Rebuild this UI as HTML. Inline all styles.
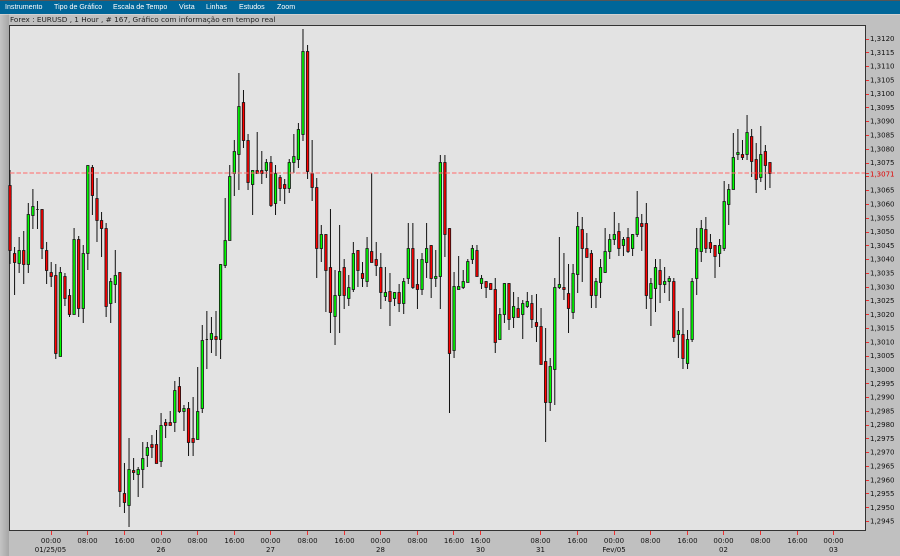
<!DOCTYPE html>
<html><head><meta charset="utf-8"><style>
html,body{margin:0;padding:0;width:900px;height:556px;overflow:hidden;background:#c0c0c0}
svg{position:absolute;left:0;top:0}
.m{font:7.1px "Liberation Sans",sans-serif;fill:#fff}
.t{font:7.28px "DejaVu Sans",sans-serif;fill:#222}
.p{font:7px "DejaVu Sans",sans-serif;fill:#111}
.x{font:7px "DejaVu Sans",sans-serif;fill:#111;text-anchor:middle}
</style></head><body>
<svg id="s" width="900" height="556" viewBox="0 0 900 556" xmlns="http://www.w3.org/2000/svg">
<defs><linearGradient id="g"><stop offset="0" stop-color="#c4c4c4"/><stop offset="1" stop-color="#a6a6a6"/></linearGradient></defs>
<rect width="900" height="556" fill="#c0c0c0"/>
<rect x="0" y="14" width="9" height="542" fill="url(#g)"/>
<rect width="900" height="14" fill="#006699"/>
<rect width="900" height="1" fill="#555"/>
<rect x="0" y="14" width="900" height="1" fill="#ddd" opacity=".6"/>
<text class="m" x="5" y="9">Instrumento</text>
<text class="m" x="54" y="9">Tipo de Gráfico</text>
<text class="m" x="113" y="9">Escala de Tempo</text>
<text class="m" x="179" y="9">Vista</text>
<text class="m" x="206" y="9">Linhas</text>
<text class="m" x="239" y="9">Estudos</text>
<text class="m" x="277" y="9">Zoom</text>
<text class="t" x="10" y="22">Forex : EURUSD , 1 Hour , # 167, Gráfico com informação em tempo real</text>
<rect x="9.5" y="25.5" width="856" height="505" fill="#e3e3e3" stroke="#333" stroke-width="1"/>
<g id="c"></g>
<line x1="10" y1="173" x2="865" y2="173" stroke="#ff7070" stroke-width="1.3" stroke-dasharray="4.5 2" opacity=".85"/>
<g id="tk"></g>
<g transform="translate(0,-.5)">
<text class="p" x="870" y="41.5">1,3120</text><text class="p" x="870" y="55.3">1,3115</text><text class="p" x="870" y="69.1">1,3110</text><text class="p" x="870" y="82.9">1,3105</text><text class="p" x="870" y="96.7">1,3100</text><text class="p" x="870" y="110.5">1,3095</text><text class="p" x="870" y="124.2">1,3090</text><text class="p" x="870" y="138">1,3085</text><text class="p" x="870" y="151.8">1,3080</text><text class="p" x="870" y="165.6">1,3075</text>
<text class="p" x="870" y="177" style="fill:#e00000">1,3071</text>
<text class="p" x="870" y="193.2">1,3065</text><text class="p" x="870" y="207">1,3060</text><text class="p" x="870" y="220.8">1,3055</text><text class="p" x="870" y="234.6">1,3050</text><text class="p" x="870" y="248.4">1,3045</text><text class="p" x="870" y="262.2">1,3040</text><text class="p" x="870" y="276">1,3035</text><text class="p" x="870" y="289.8">1,3030</text><text class="p" x="870" y="303.5">1,3025</text><text class="p" x="870" y="317.3">1,3020</text><text class="p" x="870" y="331.1">1,3015</text><text class="p" x="870" y="344.9">1,3010</text><text class="p" x="870" y="358.7">1,3005</text><text class="p" x="870" y="372.5">1,3000</text><text class="p" x="870" y="386.3">1,2995</text><text class="p" x="870" y="400.1">1,2990</text><text class="p" x="870" y="413.9">1,2985</text><text class="p" x="870" y="427.7">1,2980</text><text class="p" x="870" y="441.5">1,2975</text><text class="p" x="870" y="455.2">1,2970</text><text class="p" x="870" y="469">1,2965</text><text class="p" x="870" y="482.8">1,2960</text><text class="p" x="870" y="496.6">1,2955</text><text class="p" x="870" y="510.4">1,2950</text><text class="p" x="870" y="524.2">1,2945</text>
</g>
<text class="x" x="51" y="543">00:00</text><text class="x" x="87.5" y="543">08:00</text><text class="x" x="124.5" y="543">16:00</text><text class="x" x="161" y="543">00:00</text><text class="x" x="197.5" y="543">08:00</text><text class="x" x="234.5" y="543">16:00</text><text class="x" x="270.5" y="543">00:00</text><text class="x" x="307.5" y="543">08:00</text><text class="x" x="344.5" y="543">16:00</text><text class="x" x="380.5" y="543">00:00</text><text class="x" x="417.5" y="543">08:00</text><text class="x" x="454" y="543">16:00</text><text class="x" x="480.5" y="543">16:00</text><text class="x" x="540.5" y="543">08:00</text><text class="x" x="577.5" y="543">16:00</text><text class="x" x="614" y="543">00:00</text><text class="x" x="650.5" y="543">08:00</text><text class="x" x="687.5" y="543">16:00</text><text class="x" x="723.5" y="543">00:00</text><text class="x" x="760.5" y="543">08:00</text><text class="x" x="797.5" y="543">16:00</text><text class="x" x="833.5" y="543">00:00</text>
<text class="x" x="50.5" y="552">01/25/05</text><text class="x" x="161" y="552">26</text><text class="x" x="270.5" y="552">27</text><text class="x" x="380.5" y="552">28</text><text class="x" x="480.5" y="552">30</text><text class="x" x="540.5" y="552">31</text><text class="x" x="614" y="552">Fev/05</text><text class="x" x="723.5" y="552">02</text><text class="x" x="833.5" y="552">03</text>
</svg>
<script>
var d="r170 264 185 250,r247 295 253 262,g237 273 250 263,r231 284 250 264,g203 273 214 264,g189 229 206 215,k201 229 209 209,r209 259 209 248,r242 284 250 270,r262 287 272 276,r264 359 275 353,g267 356 272 356,r273 306 276 298,r289 317 295 314,g228 314 239 314,r236 317 239 308,g245 323 253 308,g165 270 165 253,r165 215 167 195,r178 242 198 220,r212 257 220 228,r223 317 228 306,g278 323 281 303,g250 303 275 284,r272 507 272 491,r463 513 493 502,g438 527 469 505,r458 480 470 472,g467 497 469 474,g442 488 458 469,g442 467 447 455,r435 458 444 447,r430 463 444 463,g413 467 425 461,r419 438 422 425,r411 425 422 425,g381 432 390 422,r377 413 386 411,g405 431 408 411,r402 456 408 442,r397 456 438 442,g367 439 411 439,g325 413 340 408,k311 369 339 339,g317 353 333 339,r311 356 336 339,g264 359 264 339,g198 268 240 265,g165 240 176 240,g140 196 151 173,g73 190 106 154,r90 148 102 140,r134 190 140 182,g170 215 170 184,r132 173 170 173,r151 184 170 173,g159 178 162 170,r156 207 162 205,g165 215 173 203,r175 201 177 188,r179 204 184 188,g159 193 162 188,g134 173 156 162,g123 168 129 159,g29 141 51 134,r45 179 51 171,r140 201 173 187,r178 278 187 248,g225 262 234 248,r234 312 234 270,r209 333 267 312,g270 345 295 316,g225 333 271 295,r259 309 267 295,g275 306 287 298,g242 292 253 289,r250 287 250 270,r262 287 273 278,g237 287 248 281,r173 262 251 262,r242 276 259 265,r253 309 267 292,g267 301 292 296,r273 326 291 301,g292 306 292 298,r284 312 292 303,g278 314 281 303,g223 284 248 278,r223 289 248 287,r259 309 284 289,g253 295 259 289,g223 278 248 262,r245 298 245 278,g250 287 276 278,g155 309 162 276,r155 257 162 234,r228 413 228 353,g272 358 286 350,g256 289 286 289,g270 289 281 287,g259 282 261 282,g245 264 248 259,r245 276 250 276,g275 289 278 283,r281 298 281 287,r283 289 283 289,r278 353 289 342,g308 339 314 339,g283 323 283 314,r283 330 283 319,g292 328 306 317,r297 317 308 317,g300 339 303 314,g292 308 301 306,r295 328 303 319,r294 342 322 326,r308 364 326 364,r328 442 361 402,g358 411 366 402,g278 405 287 369,g237 289 284 287,r253 300 287 289,r264 333 293 308,g264 319 273 312,g212 293 226 274,r217 282 229 248,r233 257 248 257,r250 308 253 295,g278 308 281 295,g259 298 267 282,g228 273 251 272,g234 259 239 251,g212 245 234 239,r223 256 231 248,g237 256 239 245,r228 253 237 251,g234 256 234 248,g191 237 217 234,r214 251 223 226,r203 309 223 295,g278 326 283 298,g259 312 267 288,r259 303 270 284,g267 293 281 284,g276 301 278 281,r278 342 281 337,g311 358 330 334,r308 369 334 358,g330 369 339 363,g278 342 281 339,g228 295 248 278,g220 262 228 251,r217 253 229 248,r234 253 242 248,r245 278 245 256,g239 267 245 253,g181 251 201 248,g184 225 189 204,g133 189 157 189,g129 160 152 154,r140 160 154 157,g115 160 132 154,r129 177 136 161,r143 193 159 179,g126 182 154 177,r145 190 151 165,r162 188 162 173".split(",");
var w="",R="",G="",K="";
d.forEach(function(s,i){
 var c=s[0],a=s.slice(1).split(" ").map(Number),x=+(10+4.578*i).toFixed(2);
 w+="M"+x+" "+a[0]+"V"+a[1];
 var b="M"+(x-1.2).toFixed(2)+" "+(a[2]+.5)+"h2.4v"+(a[3]-a[2])+"h-2.4z";
 if(c=="r")R+=b;else if(c=="g")G+=b;else K+=b;
});
var t=[51,87.5,124.5,161,197.5,234.5,270.5,307.5,344.5,380.5,417.5,453.7,480.5,540.5,577.5,614.3,650.5,687.5,723.5,760.7,797.5,833.7],T="";
t.forEach(function(x){T+="M"+Math.floor(x)+".5 531V535"});
var Y="";for(var i=0;i<36;i++){var y=Math.round(38.5+13.786*i)+.5;Y+="M866 "+y+"H869"}
Y+="M866 173.5H869";
document.getElementById("c").innerHTML='<path d="'+w+'" stroke="#111" fill="none"/><path d="'+R+'" fill="#f00" stroke="#111" stroke-width=".8"/><path d="'+G+'" fill="#0f0" stroke="#111" stroke-width=".8"/><path d="'+K+'" fill="#111" stroke="#111"/>';
document.getElementById("tk").innerHTML='<path d="'+T+Y+'" stroke="#f03030" fill="none"/>';
</script>
</body></html>
